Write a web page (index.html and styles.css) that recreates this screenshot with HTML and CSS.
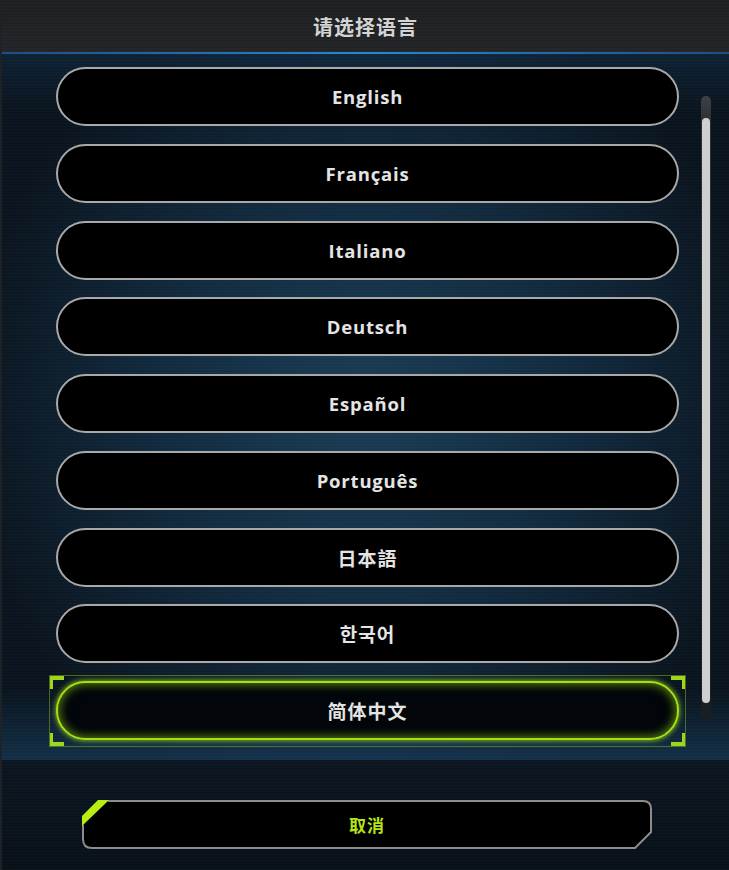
FILE: index.html
```html
<!DOCTYPE html>
<html lang="zh-CN">
<head>
<meta charset="utf-8">
<title>请选择语言</title>
<link rel="stylesheet" href="styles.css">
</head>
<body>
<div class="screen">
  <header class="header">
    <h1 class="title">请选择语言</h1>
  </header>
  <main class="list">
    <div class="items">
      <div class="item">English</div>
      <div class="item">Français</div>
      <div class="item">Italiano</div>
      <div class="item">Deutsch</div>
      <div class="item">Español</div>
      <div class="item">Português</div>
      <div class="item cjk">日本語</div>
      <div class="item cjk">한국어</div>
      <div class="item cjk selected">简体中文</div>
    </div>
    <div class="scrollbar">
      <div class="thumb"></div>
    </div>
  </main>
  <footer class="footer">
    <div class="cancel">
      <svg class="cancel-shape" viewBox="0 0 570 49" width="570" height="49" aria-hidden="true">
        <path d="M16 1 H561 Q569 1 569 9 V32 L553 48 H10 Q1 48 1 39 V17 Z" fill="#000"/>
        <path d="M26 1 H561 Q569 1 569 9 V32 L553 48 H10 Q1 48 1 39 V25" fill="none" stroke="#8c8c8c" stroke-width="2"/>
        <path d="M0 16 L16 0 L27 0 L0 26 Z" fill="#b8ec12"/>
      </svg>
      <span class="cancel-label">取消</span>
    </div>
  </footer>
</div>
</body>
</html>
```

FILE: styles.css
```css
html, body {
  margin: 0;
  padding: 0;
  background: #081018;
}

.screen {
  width: 729px;
  height: 870px;
  overflow: hidden;
  display: flex;
  flex-direction: column;
  font-family: "Open Sans", "Noto Sans CJK SC", "Noto Sans CJK KR", sans-serif;
  border-left: 2px solid #1d2226;
  box-sizing: border-box;
}

.header {
  height: 52px;
  flex: none;
  display: flex;
  align-items: center;
  justify-content: center;
  background:
    repeating-linear-gradient(0deg, rgba(255,255,255,0.018) 0 1px, transparent 1px 3px),
    linear-gradient(180deg, #1d1f21 0%, #222427 100%);
  border-bottom: 2px solid #1f5e9c;
  border-image: linear-gradient(90deg, #1a4f86 0%, #2d86c8 50%, #1a4f86 100%) 1;
}

.title {
  margin: 0;
  font-family: "Noto Sans CJK SC", sans-serif;
  font-size: 20px;
  font-weight: 700;
  color: #d4d4d4;
  letter-spacing: 1px;
}

.list {
  height: 706px;
  flex: none;
  box-sizing: border-box;
  display: flex;
  padding: 13px 0 0 54px;
  background:
    repeating-linear-gradient(0deg, rgba(255,255,255,0.02) 0 1px, transparent 1px 3px),
    linear-gradient(180deg, rgba(20,60,95,0.35) 0%, rgba(0,0,0,0) 8%, rgba(0,0,0,0) 90%, rgba(25,70,105,0.55) 100%),
    radial-gradient(ellipse 55% 60% at 50% 50%, #1a3d55 0%, #11293d 55%, #0a141e 100%);
}

.items {
  width: 623px;
  display: flex;
  flex-direction: column;
  gap: 17.75px;
}

.item {
  height: 59px;
  box-sizing: border-box;
  border: 2px solid #a9a9a9;
  border-radius: 30px;
  background: #000;
  display: flex;
  align-items: center;
  justify-content: center;
  color: #e4e4e4;
  font-size: 18.5px;
  font-weight: 700;
  letter-spacing: 0.8px;
  flex: none;
}

.item.cjk {
  font-family: "Noto Sans CJK SC", "Noto Sans CJK KR", sans-serif;
  font-size: 19px;
  letter-spacing: 1px;
}

.item.selected {
  position: relative;
  border: 2px solid #a4e014;
  background: #02060a;
  box-shadow: 0 0 5px 1px rgba(170,235,20,0.7), inset 0 0 9px 2px rgba(150,215,15,0.55);
}

.item.selected::before {
  content: "";
  position: absolute;
  top: -8px;
  bottom: -9px;
  left: -9px;
  right: -9px;
  border: 1px solid rgba(150,200,30,0.45);
  background:
    linear-gradient(#9fd61a, #9fd61a) left top / 14px 4px no-repeat,
    linear-gradient(#9fd61a, #9fd61a) left top / 3px 13px no-repeat,
    linear-gradient(#9fd61a, #9fd61a) right top / 14px 4px no-repeat,
    linear-gradient(#9fd61a, #9fd61a) right top / 3px 13px no-repeat,
    linear-gradient(#9fd61a, #9fd61a) left bottom / 14px 4px no-repeat,
    linear-gradient(#9fd61a, #9fd61a) left bottom / 3px 13px no-repeat,
    linear-gradient(#9fd61a, #9fd61a) right bottom / 14px 4px no-repeat,
    linear-gradient(#9fd61a, #9fd61a) right bottom / 3px 13px no-repeat;
  pointer-events: none;
}

.scrollbar {
  margin-left: 22px;
  margin-top: 29px;
  width: 10px;
  height: 624px;
  border-radius: 5px;
  background: linear-gradient(180deg, #3e4246 0%, #2c3034 4%, #1a1e22 100%);
  display: flex;
  flex-direction: column;
  align-items: center;
  padding-top: 22px;
  box-sizing: border-box;
}

.thumb {
  width: 8px;
  height: 585px;
  border-radius: 4px;
  background: #cfcfcf;
}

.footer {
  flex: 1;
  padding: 40px 0 0 80px;
  background:
    repeating-linear-gradient(0deg, rgba(255,255,255,0.018) 0 1px, transparent 1px 3px),
    linear-gradient(180deg, #0b1620 0%, #081018 100%);
}

.cancel {
  position: relative;
  width: 570px;
  height: 49px;
  display: flex;
  align-items: center;
  justify-content: center;
}

.cancel-shape {
  position: absolute;
  left: 0;
  top: 0;
}

.cancel-label {
  position: relative;
  font-family: "Noto Sans CJK SC", sans-serif;
  font-size: 17px;
  font-weight: 700;
  color: #b4e414;
  letter-spacing: 1px;
}
```
